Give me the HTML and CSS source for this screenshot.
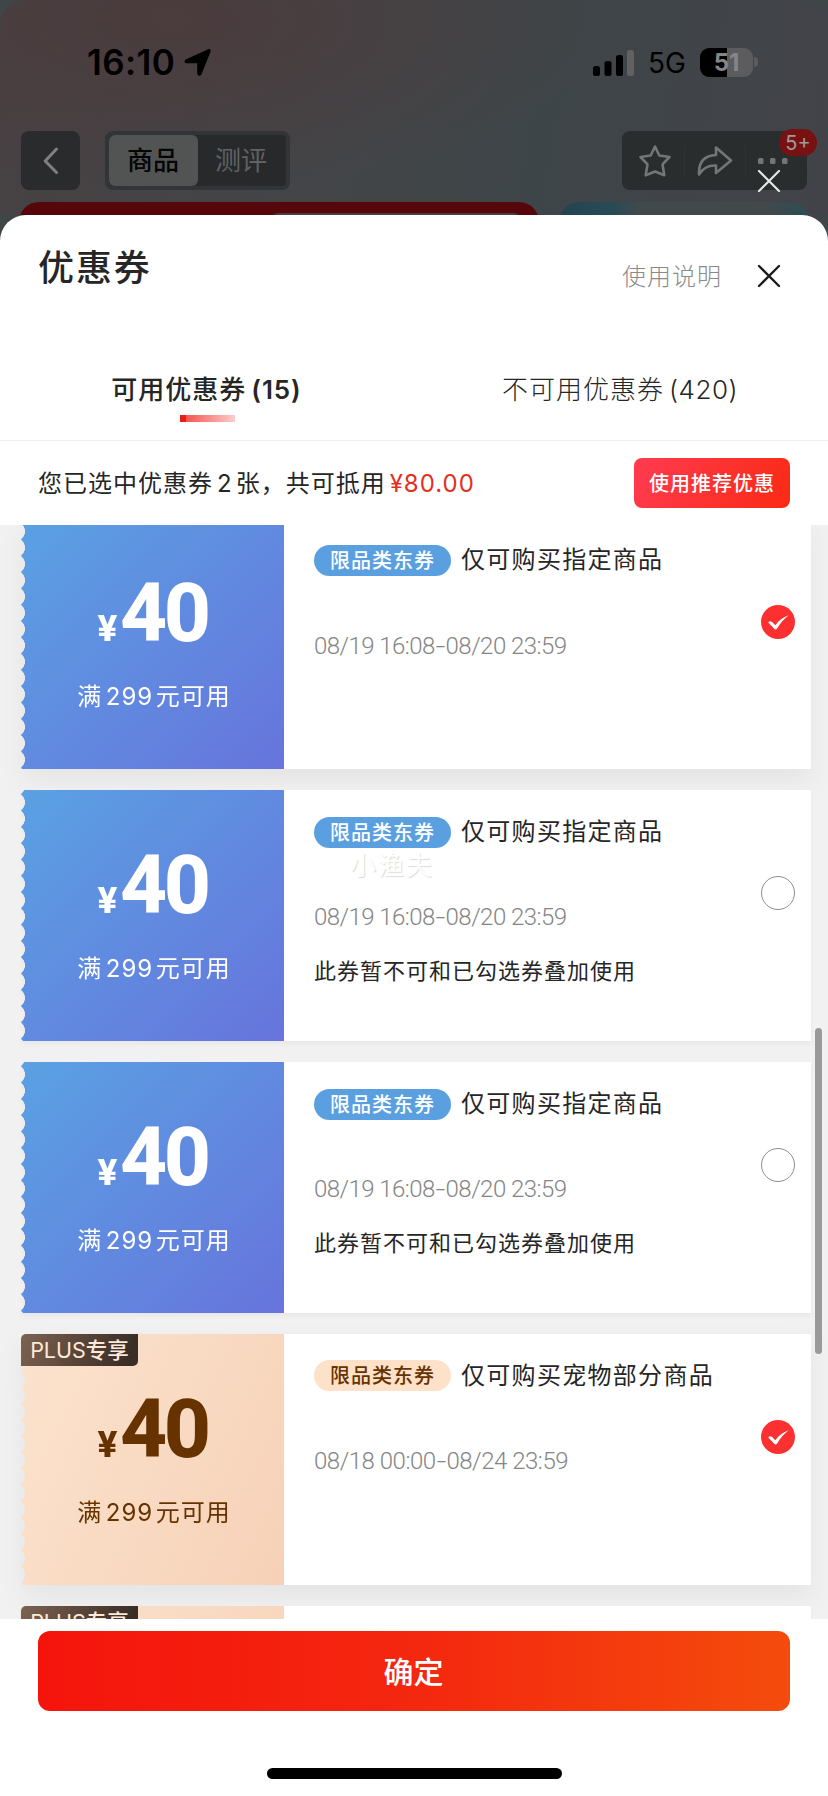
FILE: index.html
```html
<!DOCTYPE html>
<html lang="zh-CN">
<head>
<meta charset="utf-8">
<title>优惠券</title>
<link rel="stylesheet" href="styles.css">
</head>
<body>
<div class="screen">
  <header class="backdrop">
    <div class="status">
      <div class="clock"><span class="time">16:10</span>
        <svg width="28" height="29" viewBox="0 0 28 29"><path d="M2.2 11.2 24.2 1.2c1.600-.7 3 .6 2.400 2.300L17.500 26.200c-.9 2.200-4.300 1.900-4.300-.6V15.200H2.600C.1 15.200-.1 12.200 2.200 11.200z"/></svg>
      </div>
      <div class="signal">
        <svg class="bars" width="42" height="27" viewBox="0 0 42 27"><rect x="0" y="16" width="7" height="10" rx="2.500"/><rect x="11.500" y="11" width="7" height="15" rx="2.500"/><rect x="23" y="5" width="7" height="21" rx="2.500"/><rect x="34" y="0" width="7" height="26" rx="2.500" fill="#616164"/></svg>
        <span class="net">5G</span>
        <span class="battery"><span class="level">51</span></span>
        <i class="battery-tip"></i>
      </div>
    </div>
    <div class="nav">
      <div class="back"><svg width="16" height="28" viewBox="0 0 16 28"><path d="M13.500 2 2.200 14l11.300 11.500" fill="none" stroke="#7e8082" stroke-width="3" stroke-linecap="round" stroke-linejoin="round"/></svg></div>
      <div class="segment"><span class="seg-on">商品</span><span class="seg-off">测评</span></div>
      <div class="tools">
        <svg width="34" height="34" viewBox="0 0 34 34"><path d="M17 2.500 21.300 11.500 31.500 13 24.500 20.300 26.300 31.300 17 27.500 7.700 31.300 9.500 20.300 2.500 13 12.700 11.500z" fill="none" stroke="#737678" stroke-width="2.600" stroke-linejoin="round"/></svg>
        <i></i>
        <svg width="36" height="32" viewBox="0 0 36 32"><path d="M19 2.500 34 15.500 19 28V20.500C11 20 6 23 2 29.500 1.500 17 7.500 10.500 19 10z" fill="none" stroke="#737678" stroke-width="2.600" stroke-linejoin="round"/></svg>
        <i></i>
        <svg width="30" height="6" viewBox="0 0 30 6" fill="#737678"><rect width="5.500" height="6" rx="1.500"/><rect x="12" width="5.500" height="6" rx="1.500"/><rect x="24" width="5.500" height="6" rx="1.500"/></svg>
        <span class="badge">5+</span>
      </div>
    </div>
    <div class="tiles"><div class="tile-red"><i></i></div><div class="tile-blue"></div></div>
    <svg class="mask-close" width="24" height="24" viewBox="0 0 24 24"><path d="M2 2 22 22M22 2 2 22" stroke="#e6e6e6" stroke-width="2.200" stroke-linecap="round"/></svg>
  </header>

  <main class="sheet">
    <div class="head">
      <h1>优惠券</h1>
      <span class="help">使用说明</span>
      <svg width="24" height="24" viewBox="0 0 24 24"><path d="M2 2 22 22M22 2 2 22" stroke="#1c1c1c" stroke-width="2.300" stroke-linecap="round"/></svg>
    </div>
    <nav class="tabs">
      <div class="tab active"><span>可用优惠券<b>(15)</b></span></div>
      <div class="tab"><span>不可用优惠券<b>(420)</b></span></div>
    </nav>
    <div class="summary">
      <p>您已选中优惠券<b>2</b>张，<span class="rest">共可抵用</span><em>¥80.00</em></p>
      <button class="recommend">使用推荐优惠</button>
    </div>

    <section class="list">
      <article class="coupon selected first">
        <div class="value"><p class="price"><small>¥</small>40</p><p class="rule">满<b>299</b>元可用</p></div>
        <div class="info"><div class="name"><span class="pill">限品类东券</span><span>仅可购买指定商品</span></div><p class="date">08/19 16:08<i>-</i>08/20 23:59</p></div>
        <div class="pick"><svg width="34" height="34" viewBox="0 0 34 34"><circle cx="17" cy="17" r="17" fill="#fc3031"/><path d="M7.200 17.500c1.200-1.700 2.500-1.800 3.800-.4l3.300 3.200c3.300-4.800 7.700-8.200 13.400-10-4.600 3.500-8.200 7.600-11.500 12.900-1.100 1.700-2 1.700-3.200.3z" fill="#fff"/></svg></div>
      </article>
      <article class="coupon">
        <div class="value"><p class="price"><small>¥</small>40</p><p class="rule">满<b>299</b>元可用</p></div>
        <div class="info"><div class="name"><span class="pill">限品类东券</span><span>仅可购买指定商品</span></div><p class="date">08/19 16:08<i>-</i>08/20 23:59</p><p class="note">此券暂不可和已勾选券叠加使用</p><span class="watermark">小渔夫</span></div>
        <div class="pick"><i class="radio"></i></div>
      </article>
      <article class="coupon">
        <div class="value"><p class="price"><small>¥</small>40</p><p class="rule">满<b>299</b>元可用</p></div>
        <div class="info"><div class="name"><span class="pill">限品类东券</span><span>仅可购买指定商品</span></div><p class="date">08/19 16:08<i>-</i>08/20 23:59</p><p class="note">此券暂不可和已勾选券叠加使用</p></div>
        <div class="pick"><i class="radio"></i></div>
      </article>
      <article class="coupon plus selected">
        <div class="value"><p class="price"><small>¥</small>40</p><p class="rule">满<b>299</b>元可用</p></div>
        <span class="tag">PLUS<b>专享</b></span>
        <div class="info"><div class="name"><span class="pill">限品类东券</span><span>仅可购买宠物部分商品</span></div><p class="date d2">08/18 00:00<i>-</i>08/24 23:59</p></div>
        <div class="pick"><svg width="34" height="34" viewBox="0 0 34 34"><circle cx="17" cy="17" r="17" fill="#fc3031"/><path d="M7.200 17.500c1.200-1.700 2.500-1.800 3.800-.4l3.300 3.200c3.300-4.800 7.700-8.200 13.400-10-4.600 3.500-8.200 7.600-11.500 12.900-1.100 1.700-2 1.700-3.200.3z" fill="#fff"/></svg></div>
      </article>
      <article class="coupon plus">
        <div class="value"></div>
        <span class="tag">PLUS<b>专享</b></span>
        <div class="info"></div>
      </article>
      <i class="scrollbar"></i>
    </section>

    <footer class="footer">
      <button class="confirm">确定</button>
      <i class="home"></i>
    </footer>
  </main>
</div>
</body>
</html>
```

FILE: styles.css
```css
* { box-sizing: border-box; margin: 0; padding: 0; }
body { width: 828px; height: 1796px; overflow: hidden; font-family: Inter, "Noto Sans CJK SC", sans-serif; color: #262626; background: #3f4648; }
b, em, i { font-weight: inherit; font-style: normal; }
button { border: 0; font: inherit; color: #fff; }
svg { display: block; flex: none; }
.screen { width: 828px; height: 1796px; display: flex; flex-direction: column; }

.backdrop { position: relative; height: 215px; flex: none; border-radius: 25px 25px 0 0;
  background: radial-gradient(ellipse 430px 170px at 180px 20px, rgba(77,57,58,.75), rgba(77,57,58,0)), linear-gradient(100deg, #474143 0%, #424548 45%, #3e4548 65%, #424348 100%); }
.status { height: 131px; display: flex; justify-content: space-between; padding: 47px 70px 0 87px; }
.clock { display: flex; height: 30px; align-items: center; gap: 9px; color: #000; }
.time { font-size: 35px; font-weight: 600; letter-spacing: .4px; line-height: 30px; }
.signal { display: flex; height: 30px; align-items: center; }
.bars { margin-top: 2px; }
.net { width: 52px; margin-left: 13px; font-size: 28px; line-height: 32px; margin-top: 2px; color: #000; }
.battery { width: 53px; height: 29px; border-radius: 9px; background: linear-gradient(90deg, #000 0 27px, #5c5c5e 27px); text-align: center; }
.level { font-size: 24px; line-height: 29px; font-weight: 700; color: #858587; }
.battery-tip { width: 4px; height: 10px; margin-left: 1px; border-radius: 0 5px 5px 0; background: #5c5c5e; }
.nav { display: flex; height: 59px; padding: 0 21px; }
.back { width: 59px; border-radius: 8px; background: #292b2d; display: grid; place-items: center; }
.segment { margin-left: 25px; width: 185px; border-radius: 8px; background: #27292b; border: 4px solid #323537; display: flex; line-height: 52px; font-size: 26px; }
.seg-on { width: 89px; height: 51px; border-radius: 6px; background: #525453; color: #050505; font-weight: 500; text-align: center; padding-right: 1px; }
.seg-off { flex: 1; text-align: center; color: #606264; padding-right: 2px; }
.tools { position: relative; margin-left: auto; width: 185px; border-radius: 8px; background: #292d2e; display: flex; align-items: center; padding: 0 19px 0 16px; justify-content: space-between; }
.tools i { width: 1px; height: 30px; background: #303334; }
.badge { position: absolute; right: -10px; top: -2px; width: 38px; height: 27px; border-radius: 14px; background: #771112; color: #a3999a; font-size: 20px; line-height: 29px; text-align: center; }
.tiles { display: flex; margin-top: 12px; padding: 0 19px; gap: 20px; height: 13px; overflow: hidden; }
.tile-red { width: 520px; height: 40px; border-radius: 24px; background: #55070b; padding: 11px 0 0 250px; }
.tile-red i { display: block; width: 254px; height: 20px; border-radius: 16px; background: #493f41; }
.tile-blue { flex: 1; height: 40px; border-radius: 28px; background: linear-gradient(90deg, #244350, #294b56 22%, #42494c 32%, #42494b 83%, #2d4c55); }
.mask-close { position: absolute; left: 757px; top: 169px; }

.sheet { flex: 1; min-height: 0; display: flex; flex-direction: column; background: #fff; border-radius: 26px 26px 0 0; }
.head { height: 135px; display: flex; align-items: flex-start; padding: 25px 47px 0 38px; }
.head h1 { flex: 1; padding-top: 1px; font-size: 36px; font-weight: 500; letter-spacing: 1.900px; line-height: 54px; }
.help { font-size: 24px; font-weight: 300; letter-spacing: 1px; line-height: 36px; color: #8a8a8a; margin: 19px 35px 0 0; }
.head svg { margin-top: 24px; }
.tabs { display: flex; height: 91px; border-bottom: 1px solid #eee; font-size: 26px; letter-spacing: 1px; }
.tab { width: 50%; padding: 21px 2px 0 0; text-align: center; line-height: 38px; font-weight: 300; }
.tab b { letter-spacing: .5px; margin-left: 5px; }
.active { padding: 21px 1px 0 0; font-weight: 500; }
.active b { font-weight: 600; letter-spacing: .9px; }
.active::after { content: ""; display: block; width: 55px; height: 7px; margin: 6px 0 0 180px; background: linear-gradient(90deg, #e61e14 0 6px, #f4564f 6px, #f9cdca); }
.summary { height: 84px; display: flex; align-items: center; justify-content: space-between; padding: 0 38px; font-size: 24px; letter-spacing: 1px; }
.summary p { margin-top: -4px; }
.summary p b { margin: 0 3px 0 4px; }
.summary em { color: #e1301f; letter-spacing: 1px; margin-left: 4px; }
.recommend { width: 156px; height: 50px; border-radius: 8px; font-size: 20px; font-weight: 500; letter-spacing: 1px; padding-bottom: 1px; background: linear-gradient(115deg, #ff3b50, #fa2a13); }

.list { position: relative; height: 1094px; overflow: hidden; background: #f1f1f1; padding: 0 17px 0 21px; }
.coupon { position: relative; display: flex; height: 250.500px; margin-bottom: 21.400px; filter: drop-shadow(0 3px 2px rgba(0,0,0,.035)); }
.selected { filter: drop-shadow(0 12px 12px rgba(0,0,0,.05)); }
.first { margin-top: -6.500px; }
.value { width: 263px; color: #fff; text-align: center; background: linear-gradient(135deg, #5aa1e3, #6774dc);
  -webkit-mask: radial-gradient(circle at -6px 50%, transparent 9.700px, #000 10.200px) 0 4.200px / 100% 16.300px repeat-y;
  mask: radial-gradient(circle at -6px 50%, transparent 9.700px, #000 10.200px) 0 4.200px / 100% 16.300px repeat-y; }
.price { margin-top: 54.500px; height: 80px; line-height: 80px; font-family: Roboto, sans-serif; font-size: 82px; font-weight: 800; letter-spacing: -3.500px; }
.price small { font-size: 37px; letter-spacing: 2.500px; }
.rule { margin-top: 26px; line-height: 36px; font-size: 24px; letter-spacing: 1px; padding-left: 3px; }
.rule b { margin: 0 2.500px 0 3.500px; }
.info { flex: 1; padding: 25.500px 0 0 30px; background: #fff; }
.name { display: flex; height: 31.500px; align-items: center; font-size: 24px; line-height: 34px; letter-spacing: 1.300px; white-space: nowrap; }
.name span + span { margin-top: 1px; }
.pill { width: 137px; height: 31px; border-radius: 16px; margin: 1px 10px 0 0; background: #5a9fe0; color: #fff; font-size: 20px; font-weight: 500; letter-spacing: 1px; line-height: 33px; text-align: center; }
.date { margin-top: 56px; line-height: 28px; font-family: Roboto, sans-serif; font-size: 24px; font-weight: 300; letter-spacing: -.55px; color: #858585; }
.date i { display: inline-block; margin: 0 2.200px; transform: scaleX(1.450); }
.d2 { letter-spacing: -.48px; }
.note { margin-top: 21.500px; line-height: 36px; font-size: 22px; letter-spacing: 1px; }
.pick { width: 50px; padding-top: 86px; background: #fff; }
.radio { display: block; width: 34px; height: 34px; border: 1.500px solid #8e8e8e; border-radius: 50%; }
.plus .value { color: #663300; background: linear-gradient(115deg, #fce3ce, #f6d1b7); }
.plus .pill { color: #663300; background: #fee1c9; }
.tag { position: absolute; left: 0; top: 0; width: 117px; height: 32px; border-radius: 5px 0 5px 0; background: linear-gradient(110deg, #7d6250, #3a2e27 90%); color: #fee9d8; font-size: 21.500px; line-height: 32px; text-align: center; white-space: nowrap; }
.tag b { font-weight: 500; }
.watermark { position: absolute; left: 329px; top: 57px; font-size: 26px; line-height: 38px; letter-spacing: 1.900px; color: #fff; text-shadow: 1px 1px 1px rgba(0,0,0,.14); }
.scrollbar { position: absolute; left: 815px; top: 503px; width: 7px; height: 326px; border-radius: 4px; background: #9a9a9a; }
.footer { flex: 1; display: flex; flex-direction: column; align-items: center; background: #fff; padding-top: 12px; }
.confirm { width: 752px; height: 80px; border-radius: 12px; padding: 0 1px 3px 0; background: linear-gradient(90deg, #f5140c, #f4270f 50%, #f44c0c); font-size: 30px; font-weight: 500; }
.home { width: 295px; height: 11px; margin-top: 57px; border-radius: 6px; background: #000; }
```
